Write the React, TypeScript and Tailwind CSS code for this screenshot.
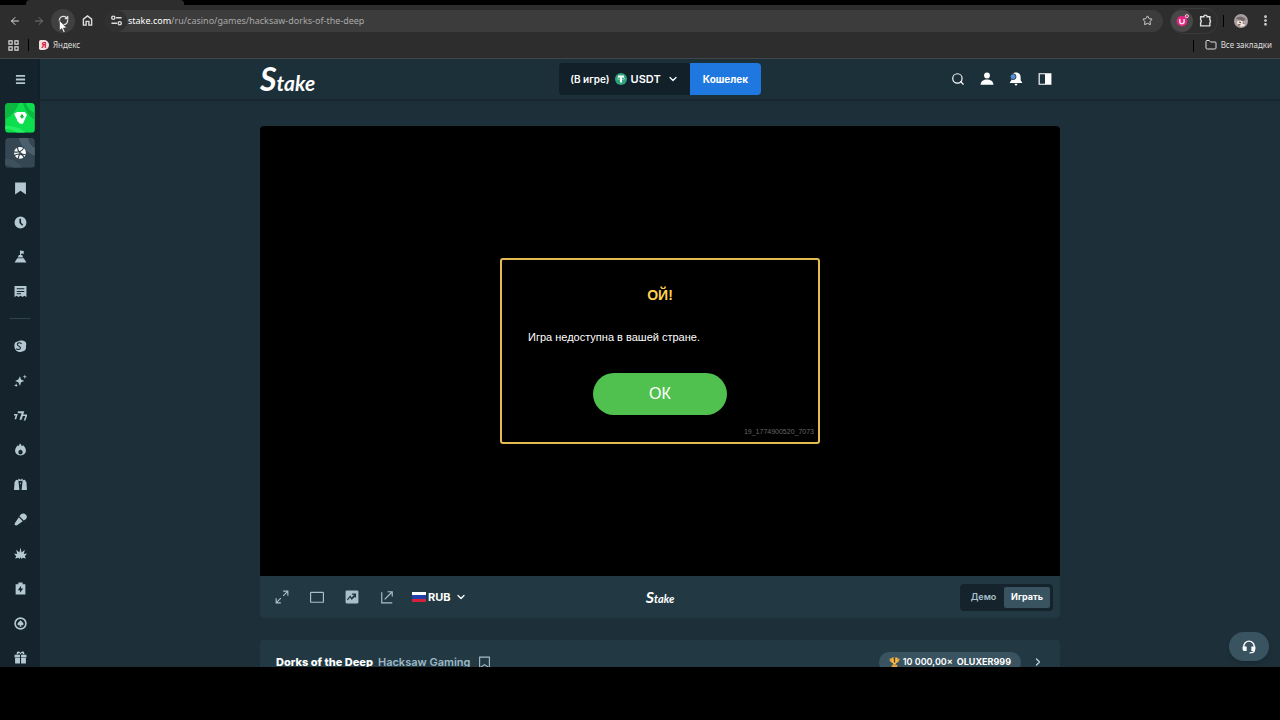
import React from 'react';
import { ArrowLeft, ArrowRight, RotateCw, Star, ChevronDown, ChevronRight, EllipsisVertical, Folder, Search } from 'lucide-react';

interface IconProps {
  className?: string;
}

const Svg = ({ className = 'size-4', children }: IconProps & { children: React.ReactNode }) => (
  <svg viewBox="0 0 24 24" fill="currentColor" className={className} aria-hidden="true">{children}</svg>
);

const SIDEBAR_TOP = [
  {
    label: 'Избранное',
    icon: <path d="M2 1h20v22l-10-7-10 7z" />,
  },
  {
    label: 'Недавние',
    icon: <path fillRule="evenodd" d="M12 1a11 11 0 1 1 0 22 11 11 0 0 1 0-22zm-2 4v8l5 5 2-2-4-4V5z" />,
  },
  {
    label: 'Испытания',
    icon: <><path d="M11 1l7 1v5h-5v2h-2z" /><path d="M9 9h6l2 5H7zM6 15h12l5 8H1z" /></>,
  },
  {
    label: 'Мои ставки',
    icon: <path fillRule="evenodd" d="M1 2h22v20l-4-2-3 2-4-2-4 2-3-2-4 2zm4 4v2h14V6zm0 5v2h14v-2zm0 4v2h8v-2z" />,
  },
];

const SIDEBAR_BOTTOM = [
  {
    label: 'Stake Originals',
    icon: (
      <>
        <path d="M9 2c5-2 9 0 12 1 3 4 1 7 1 9 1 5-2 9-7 9-5 2-10 1-12-3C0 14 0 6 3 4z" />
        <path d="M14 7c-3-3-8-2-8 1 0 4 7 3 6 7-1 3-6 3-8 1" fill="none" stroke="#15232c" strokeWidth="2" />
      </>
    ),
  },
  {
    label: 'Новинки',
    icon: <><path d="M11 4l2 6 6 3-6 2-2 7-3-7-6-2 6-3z" /><path d="M20 1l1 3 3 1-3 1-1 3-1-3-3-1 3-1zM4 17l1 3 2 1-2 1-1 2-1-2-3-1 3-1z" /></>,
  },
  {
    label: 'Слоты',
    icon: <path d="M7 4h12l-5 16h-4l4-12H7zM0 9h7l-3 10H1l2-7H0zM17 10h7v3l-3 8h-3l3-8h-5z" />,
  },
  {
    label: 'Популярное',
    icon: <path fillRule="evenodd" d="M11 1c2 1 3 3 3 5l3-2c3 3 5 6 5 10 0 5-4 9-10 9S2 19 2 14c0-3 2-7 5-10l1 2c1-1 2-3 3-5zm1 11c-3 2-4 3-4 5a4 4 0 0 0 8 0c0-2-1-3-4-5z" />,
  },
  {
    label: 'Live-казино',
    icon: <><path d="M4 3l4 1 2 18H0L1 8zM20 3l-4 1-2 18h10L23 8z" /><path d="M8 1l4 2 4-2v5l-4-1-4 1zM12 8l1 2-1 2-1-2z" /></>,
  },
  {
    label: 'Игровые шоу',
    icon: <><path d="M12 3c3-3 7-3 10 0s2 7-1 9l-3 2-8-8z" /><path d="M9 8l7 7L5 23l-4-1 1-4z" /></>,
  },
  {
    label: 'Бонусные игры',
    icon: <path d="M12 1l2 9 6-5-2 8 6-1-4 5 2 4-6-1-2 2-2-3-2 3-2-2-6 1 2-4-4-5 6 1-2-8 6 5z" />,
  },
  {
    label: 'Повышенный RTP',
    icon: <path fillRule="evenodd" d="M8 1h8v3h5v19H3V4h5zm5 6l-6 8h4v5l6-8h-4z" />,
  },
  {
    label: 'Рулетка',
    icon: (
      <>
        <circle cx="12" cy="12" r="10" fill="none" stroke="currentColor" strokeWidth="3" />
        <path d="M12 6l5 5c2 3-1 5-4 4l1 3h-4l1-3c-3 1-6-1-4-4z" />
      </>
    ),
  },
  {
    label: 'Акции',
    icon: <path d="M11 7H1v5h10zM23 7H13v5h10zM2 13h9v10H2zM13 13h9v10h-9zM5 6c-1-7 6-6 7-2 1-4 8-5 7 2h-3c1-3-3-3-3 0h-2c0-3-4-3-3 0z" />,
  },
];

function StakeLogo({ small = false }: { small?: boolean }) {
  return (
    <a href="#" aria-label="Stake" className="flex items-baseline font-['Lato',sans-serif] font-bold italic leading-none text-white">
      <span className={small ? 'text-base leading-none' : 'text-[32px] leading-none'}>S</span>
      <span className={small ? 'text-[11px] leading-none' : 'text-[21px] leading-none'}>take</span>
    </a>
  );
}

function BrowserBar() {
  return (
    <div className="shrink-0 border-b border-[#40484c] bg-[#2d2d2d] font-['Noto_Sans',sans-serif] text-[#dedede]">
      <div className="flex h-[5px] bg-black">
        <div className="w-[26px] rounded-br bg-black" />
        <div className="w-[158px] rounded-t bg-[#2d2d2d]" />
      </div>
      <div className="flex h-[31px] items-center pl-[3px]">
        <button aria-label="Назад" className="grid size-6 place-items-center"><ArrowLeft className="size-3" /></button>
        <button aria-label="Вперёд" className="grid size-6 place-items-center text-[#777]"><ArrowRight className="size-3" /></button>
        <button aria-label="Обновить" className="relative grid size-6 place-items-center rounded-full bg-[#404040]">
          <RotateCw className="size-[11px]" strokeWidth={3} />
          <svg viewBox="0 0 9 13" className="absolute left-2 top-[11px] h-[13px] w-[9px]">
            <path d="M.5.5v10l2.3-2 1.7 4 1.6-.7-1.7-3.8h3.3z" fill="#fff" stroke="#222" strokeWidth=".5" />
          </svg>
        </button>
        <button aria-label="Главная" className="grid size-6 place-items-center">
          <svg viewBox="0 0 24 24" fill="none" stroke="currentColor" strokeWidth="3" className="size-[11px]">
            <path d="M3 22V9l9-7 9 7v13h-6v-8H9v8z" />
          </svg>
        </button>
        <div className="ml-[6px] mr-[7px] flex h-[22px] flex-1 items-center rounded-full bg-[#3c3c3c] pr-[10px]">
          <span className="grid size-[22px] place-items-center rounded-full bg-[#303030]">
            <svg viewBox="0 0 24 24" fill="none" stroke="currentColor" strokeWidth="3" className="size-[11px]">
              <circle cx="5" cy="6" r="3.5" /><path d="M11 6h12M1 18h12" /><circle cx="19" cy="18" r="3.5" />
            </svg>
          </span>
          <span className="ml-px flex-1 text-[9px] text-[#a9a9a9]"><span className="text-white">stake.com</span>/ru/casino/games/hacksaw-dorks-of-the-deep</span>
          <Star className="size-[11px]" />
        </div>
        <div className="flex items-center rounded-full border border-[#3a3a3a]">
          <span className="grid size-[22px] place-items-center rounded-full bg-[#484848]">
            <svg viewBox="0 0 24 24" className="size-[13px]">
              <circle cx="11" cy="13" r="10" fill="#e0267e" />
              <path d="M7 9v5a4 4 0 0 0 8 0V9" fill="none" stroke="#ffd0e6" strokeWidth="3" />
              <circle cx="20" cy="4" r="3" fill="#e0267e" stroke="#eee" strokeWidth="1.5" />
            </svg>
          </span>
          <button aria-label="Расширения" className="grid size-6 place-items-center">
            <svg viewBox="0 0 24 24" fill="none" stroke="currentColor" strokeWidth="2.6" className="size-[13px]">
              <path d="M3 5h6a3 3 0 0 1 6 0h5v6a3 3 0 0 1 0 5v6H3v-6a3 3 0 0 0 0-5z" />
            </svg>
          </button>
        </div>
        <div className="mx-[5px] h-3 w-px bg-black" />
        <svg viewBox="0 0 24 24" className="ml-[5px] size-[14px]">
          <circle cx="12" cy="12" r="12" fill="#a8a09e" />
          <path d="M3 8c5-5 11-5 17 1l-4 4-7-3z" fill="#71686b" />
          <path d="M5 13l6-2 8 3-1 6-6 2-6-4z" fill="#efe7df" />
          <path d="M9 14l3 1M15 15l3 1M7 19l4-1" stroke="#69433b" strokeWidth="2" />
        </svg>
        <button aria-label="Меню браузера" className="ml-[5px] mr-[3px] grid size-6 place-items-center"><EllipsisVertical className="size-[13px]" strokeWidth={3} /></button>
      </div>
      <div className="flex h-[22px] items-start px-2 text-[8px] leading-[18px]">
        <div className="flex h-[18px] flex-1 items-center">
          <svg viewBox="0 0 24 24" fill="none" stroke="currentColor" strokeWidth="2.5" className="size-[11px]">
            <path d="M2 2h7v7H2zM15 2h7v7h-7zM2 15h7v7H2zM15 15h7v7h-7z" />
          </svg>
          <span className="ml-[9px] mr-[10px] h-3 w-px bg-black" />
          <a href="#" className="flex items-center gap-1">
            <span className="grid h-[10px] w-[10px] place-items-center rounded-xs rounded-r-md bg-[#f6dfe2] text-[8px] font-bold leading-none text-[#d4213d]">Я</span>
            Яндекс
          </a>
        </div>
        <span className="mr-[11px] mt-1 h-3 w-px bg-black" />
        <a href="#" className="flex h-[18px] items-center gap-1"><Folder className="size-3" />Все закладки</a>
      </div>
    </div>
  );
}

function Sidebar() {
  return (
    <nav className="flex w-10 shrink-0 flex-col items-center bg-[#15232c] text-[#b3c8d1]">
      <button aria-label="Меню" className="grid h-[41px] place-items-center">
        <Svg className="size-[11px]"><path d="M2 2h20v4H2zM2 10h20v4H2zM2 18h20v4H2z" /></Svg>
      </button>
      <a href="#" aria-label="Казино" className="mt-1 block size-[30px] overflow-hidden rounded">
        <svg viewBox="0 0 30 30" className="size-full">
          <rect width="30" height="30" fill="#0dde4e" />
          <path d="M0 0h18c3 10 8 15 12 17v-7C25 8 22 4 21 0h-7C10 10 5 14 0 16z" fill="#0bb840" />
          <path d="M0 23c12 0 18 4 20 7h-8c-4-3-8-4-12-4z" fill="#25ed63" />
          <path d="M9 11l3-2v8zM12 9h8l2 3-4 9h-3l-3-3z" fill="#fff" />
          <path d="M17 11l2 3-2 2-2-2z" fill="#0cbf43" />
        </svg>
      </a>
      <a href="#" aria-label="Спорт" className="mt-[5px] block size-[30px] overflow-hidden rounded">
        <svg viewBox="0 0 30 30" className="size-full">
          <rect width="30" height="30" fill="#344753" />
          <path d="M14 0h9c1 5 3 8 7 10v8C21 14 16 9 14 0z" fill="#4b606c" />
          <path d="M0 21c7 0 13 3 17 9H8c-2-2-5-3-8-3z" fill="#3e525e" />
          <circle cx="15" cy="15" r="6" fill="#fff" />
          <path d="M9 14c5 1 9-1 10-5M12 9c1 5 4 8 9 8M9 18c4-3 9-2 10 2M15 15l-2 6" fill="none" stroke="#344753" strokeWidth="1.2" />
        </svg>
      </a>
      <div className="mt-[14px] flex h-[118px] flex-col justify-between">
        {SIDEBAR_TOP.map(({ label, icon }) => (
          <a key={label} href="#" aria-label={label} className="grid h-[14px] place-items-center"><Svg className="size-[13px]">{icon}</Svg></a>
        ))}
      </div>
      <div className="mb-[18px] mt-5 h-px w-5 shrink-0 bg-[#314550]" />
      <div className="flex h-[330px] shrink-0 flex-col justify-between">
        {SIDEBAR_BOTTOM.map(({ label, icon }) => (
          <a key={label} href="#" aria-label={label} className="grid h-[18px] place-items-center"><Svg className="size-[13px]">{icon}</Svg></a>
        ))}
      </div>
    </nav>
  );
}

function Header() {
  return (
    <header className="h-10 shrink-0 bg-[#1c303a] shadow-[0_1px_3px_rgba(0,0,0,0.35)]">
      <div className="mx-auto grid h-full max-w-[800px] grid-cols-[1fr_auto_1fr] items-center text-white">
        <StakeLogo />
        <div className="flex h-8 overflow-hidden rounded text-[10px] font-semibold">
          <button className="flex w-[131px] items-center justify-center gap-[5px] bg-[#12202a]">
            <span>(В игре)</span>
            <svg viewBox="0 0 24 24" className="size-3">
              <circle cx="12" cy="12" r="12" fill="#2fa37c" />
              <path d="M6 5h12v4h-4v10h-4V9H6z" fill="#fff" />
              <ellipse cx="12" cy="11" rx="8" ry="2" fill="none" stroke="#d9f5ea" />
            </svg>
            <span className="-ml-px text-[11px]">USDT</span>
            <ChevronDown className="ml-px size-3" strokeWidth={2.5} />
          </button>
          <button className="w-[71px] bg-[#1f78e0] font-bold">Кошелек</button>
        </div>
        <div className="flex items-center justify-end gap-[15px] pr-2">
          <button aria-label="Поиск"><Search className="size-[14px]" /></button>
          <button aria-label="Профиль"><Svg className="size-[14px]"><circle cx="12" cy="6" r="5" /><path d="M1 22c0-12 22-12 22 0z" /></Svg></button>
          <button aria-label="Уведомления">
            <Svg className="size-[14px]">
              <path d="M12 1c6 0 8 4 8 9v4l3 5H1l3-5v-4c0-5 2-9 8-9zM9 20h6l-3 4z" />
              <circle cx="7" cy="8" r="5" fill="#558fd8" stroke="#1c303a" strokeWidth="1.5" />
            </Svg>
          </button>
          <button aria-label="Чат"><Svg className="size-[14px]"><path fillRule="evenodd" d="M1 2h22v20H1zm2 2v16h9V4z" /></Svg></button>
        </div>
      </div>
    </header>
  );
}

function ErrorDialog() {
  return (
    <div role="alertdialog" aria-labelledby="err-title" className="flex w-80 flex-col rounded-[3px] border-2 border-[#e3bb50] pb-[6px] pt-[25px] font-['Liberation_Sans',sans-serif] text-white">
      <h2 id="err-title" className="text-center text-sm font-bold leading-5 text-[#ffd04f]">ОЙ!</h2>
      <p className="mt-[22px] px-[26px] text-[11px] leading-5">Игра недоступна в вашей стране.</p>
      <button className="mx-auto mt-[26px] h-[42px] w-[134px] rounded-full bg-[#50c14f] text-base">ОК</button>
      <p className="mt-3 pr-1 text-right text-[7px] leading-[9px] text-[#666]">19_1774900520_7073</p>
    </div>
  );
}

function GameToolbar() {
  return (
    <div className="grid h-[42px] grid-cols-[1fr_auto_1fr] items-center rounded-b bg-[#223943] px-[7px] text-[#a9c0cb]">
      <div className="flex items-center gap-[21px] pl-2">
        <button aria-label="На весь экран">
          <svg viewBox="0 0 24 24" fill="none" stroke="currentColor" strokeWidth="2" className="size-[14px]"><path d="M14 2h8v8M22 2l-8 8M10 22H2v-8M2 22l8-8" /></svg>
        </button>
        <button aria-label="Театральный режим">
          <svg viewBox="0 0 24 24" fill="none" stroke="currentColor" strokeWidth="2" className="size-[14px]"><rect x="1" y="4" width="22" height="17" rx="1" /></svg>
        </button>
        <button aria-label="Статистика">
          <svg viewBox="0 0 24 24" className="size-[14px]">
            <rect x="1" y="1" width="22" height="22" rx="2" fill="currentColor" />
            <path d="M4 17l5-6 2 4 6-7M12 7h6v6M11 16l7-7" fill="none" stroke="#223943" strokeWidth="2" />
          </svg>
        </button>
        <button aria-label="Открыть в окне">
          <svg viewBox="0 0 24 24" fill="none" stroke="currentColor" strokeWidth="2" className="size-[14px]"><path d="M3 4v18h18M13 3h8v8M21 3L8 16" /></svg>
        </button>
        <button className="-ml-[3px] flex items-center text-[11px] font-bold text-white">
          <svg viewBox="0 0 14 10" className="mr-0.5 h-[10px] w-[14px]"><path fill="#fff" d="M0 0h14v4H0z" /><path fill="#2440a8" d="M0 3h14v4H0z" /><path fill="#d5223a" d="M0 7h14v3H0z" /></svg>
          RUB
          <ChevronDown className="ml-1 size-3" strokeWidth={2.5} />
        </button>
      </div>
      <StakeLogo small />
      <div className="ml-auto flex rounded bg-[#15232c] p-[3px] text-[9px] font-semibold">
        <button className="h-[21px] w-[41px]">Демо</button>
        <button className="h-[21px] w-[46px] rounded-xs bg-[#3a5360] font-bold text-white">Играть</button>
      </div>
    </div>
  );
}

export default function App() {
  return (
    <div className="flex h-screen flex-col bg-black font-['Inter',sans-serif]">
      <BrowserBar />
      <div className="relative flex min-h-0 flex-1 overflow-hidden bg-[#1d3039]">
        <Sidebar />
        <div className="flex min-w-0 flex-1 flex-col">
          <Header />
          <main className="mx-auto w-full max-w-[800px] pt-[27px]">
            <section className="overflow-hidden rounded">
              <div className="grid h-[450px] place-items-center bg-black"><ErrorDialog /></div>
              <GameToolbar />
            </section>
            <section className="mt-[22px] flex h-24 items-start rounded bg-[#223943] px-4 pt-3">
              <div className="flex h-5 flex-1 items-center text-[11px]">
                <h1 className="font-extrabold text-white">Dorks of the Deep</h1>
                <a href="#" className="ml-[5px] font-semibold text-[#9db8c6]">Hacksaw Gaming</a>
                <button aria-label="В избранное" className="ml-2 text-[#a9c0cb]">
                  <svg viewBox="0 0 24 24" fill="none" stroke="currentColor" strokeWidth="2" className="size-[13px]"><path d="M3 2h18v20l-9-6-9 6z" /></svg>
                </button>
              </div>
              <div className="flex h-5 items-center rounded-full bg-[#3a5360] px-[10px] text-[9px] text-white">
                <svg viewBox="0 0 24 24" className="mr-[3px] size-[11px]">
                  <path d="M1 3h22c0 7-3 9-7 10l-2 4h4v6H6v-6h4l-2-4C4 12 1 10 1 3z" fill="#e2a23b" />
                  <path d="M6 1h12v9l-4 5h-4l-4-5z" fill="#f4bd50" />
                  <path d="M10 5l2-2v9" fill="none" stroke="#594019" strokeWidth="3" />
                </svg>
                <span className="font-semibold">10 000,00×</span>
                <span className="ml-1 font-bold">OLUXER999</span>
              </div>
              <button aria-label="Подробнее" className="ml-[11px] grid h-5 place-items-center text-[#c5d6de]"><ChevronRight className="size-3" strokeWidth={2.5} /></button>
            </section>
          </main>
        </div>
        <button aria-label="Поддержка" className="absolute bottom-[6px] right-[11px] grid h-[29px] w-10 place-items-center rounded-full bg-[#3a5360] text-white shadow-md">
          <svg viewBox="0 0 24 24" className="size-[14px]">
            <path d="M3 14v-3a9 9 0 0 1 18 0v7c0 3-3 4-8 4" fill="none" stroke="currentColor" strokeWidth="2.4" />
            <path d="M1 11h7v8H4c-2 0-3-2-3-4zM16 11h7v4c0 2-1 4-3 4h-4z" fill="currentColor" />
          </svg>
        </button>
      </div>
      <footer className="h-[53px] shrink-0 bg-black" />
    </div>
  );
}
